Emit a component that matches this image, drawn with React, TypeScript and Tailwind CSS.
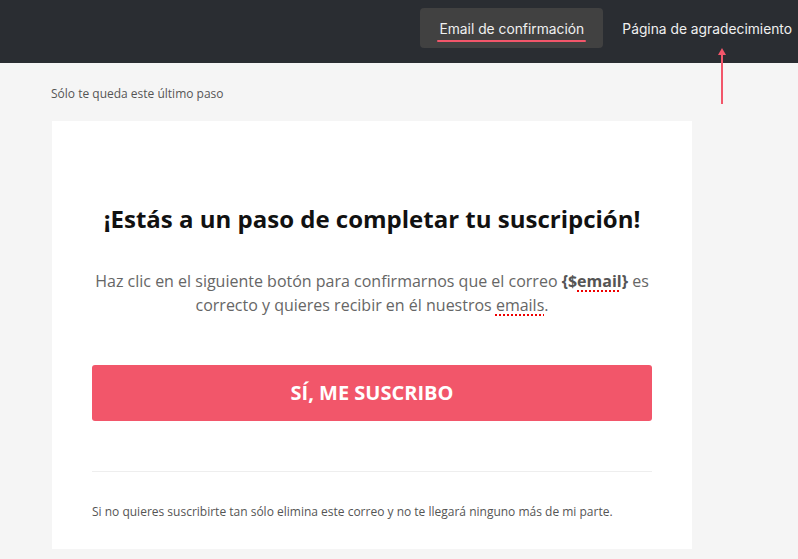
export default function App() {
  return (
    <div className="min-h-[559px] bg-[#f5f5f5] font-['Open_Sans',sans-serif]">
      <header className="relative flex h-[63px] items-start justify-end bg-[#2a2d32] pt-2 pr-[6px] font-['Inter',sans-serif] text-[13.8px] text-[#f0f0f0]">
        <div className="flex h-10 w-[183px] flex-col items-center rounded-[4px] bg-[#414141] pt-[11px]">
          <span className="leading-[20px]">Email de confirmación</span>
          <span className="mt-[1px] h-[2px] w-[149px] rounded bg-[#f2566a]" />
        </div>
        <div className="ml-[19px] pt-[11px] leading-[20px]">Página de agradecimiento</div>
        <svg className="absolute left-[717px] top-[46px]" width="10" height="60" viewBox="0 0 10 60">
          <line x1="5" y1="4" x2="5" y2="58" stroke="#f2566a" strokeWidth="2" />
          <path d="M1 9 L5 2 L9 9 Z" fill="#f2566a" />
        </svg>
      </header>
      <div className="pl-[51px] pt-[23px] text-[12px] leading-[16px] text-[#555]">Sólo te queda este último paso</div>
      <div className="ml-[52px] mt-[19px] w-[640px] bg-white px-10 pb-[29px] pt-[82px] text-center">
        <h1 className="text-[24px] font-bold leading-[32px] text-[#111]">¡Estás a un paso de completar tu suscripción!</h1>
        <p className="mt-[34px] text-[16px] leading-[24px] text-[#666]">
          Haz clic en el siguiente botón para confirmarnos que el correo{' '}
          <b className="text-[#555]">
            {'{$'}
            <span className="underline decoration-[#e00] decoration-dotted decoration-2 underline-offset-[3px]">email</span>
            {'}'}
          </b>{' '}
          es correcto y quieres recibir en él nuestros{' '}
          <span className="underline decoration-[#e00] decoration-dotted decoration-2 underline-offset-[3px]">emails</span>.
        </p>
        <button className="mt-[48px] flex h-14 w-full items-center justify-center rounded-[3px] bg-[#f2566a] text-[20px] font-bold text-white">
          SÍ, ME SUSCRIBO
        </button>
        <div className="mt-[50px] h-px bg-[#eeeeee]" />
        <p className="mt-[32px] text-left text-[12px] leading-[16px] text-[#555]">
          Si no quieres suscribirte tan sólo elimina este correo y no te llegará ninguno más de mi parte.
        </p>
      </div>
    </div>
  );
}
